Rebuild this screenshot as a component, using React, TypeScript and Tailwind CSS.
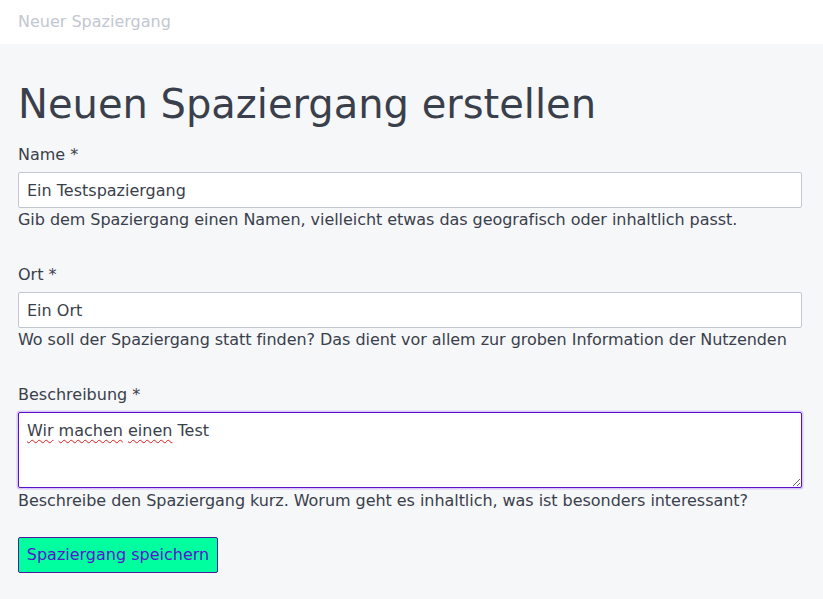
export default function App() {
  return (
    <div className="min-h-[599px] bg-[#f6f7f9] font-['DejaVu_Sans',sans-serif] text-[#3a404b]">
      <header className="flex h-[44px] items-center bg-white px-[18px]">
        <span className="text-[16px] text-[#c2c7d1]">Neuer Spaziergang</span>
      </header>
      <main className="pl-[18px] pr-[21px] pt-[32px]">
        <h1 className="mb-[11px] text-[40px] leading-[56px]">Neuen Spaziergang erstellen</h1>
        <form className="flex flex-col" onSubmit={(e) => e.preventDefault()}>
          <Field label="Name *" value="Ein Testspaziergang" help="Gib dem Spaziergang einen Namen, vielleicht etwas das geografisch oder inhaltlich passt." />
          <Field label="Ort *" value="Ein Ort" help="Wo soll der Spaziergang statt finden? Das dient vor allem zur groben Information der Nutzenden" />
          <label className="block text-[16px] leading-[24px]">Beschreibung *</label>
          <div className="relative mt-[5px]">
            <textarea
              spellCheck={false}
              defaultValue="Wir machen einen Test"
              className="block h-[76px] w-full resize-y rounded-[2px] border border-[#5b10c9] bg-white px-[8px] py-[6px] text-[16px] leading-[24px] text-[#3a404b] outline-none ring-[1.5px] ring-[#d8c8f6]"
            />
            {/* spellcheck squiggles */}
            <div className="pointer-events-none absolute left-0 top-0 px-[9px] py-[7px] text-[16px] leading-[24px] text-transparent">
              <span className="underline decoration-[#e01b1b] decoration-wavy decoration-[1px] underline-offset-[3px]">Wir</span>{" "}
              <span className="underline decoration-[#e01b1b] decoration-wavy decoration-[1px] underline-offset-[3px]">machen</span>{" "}
              <span className="underline decoration-[#e01b1b] decoration-wavy decoration-[1px] underline-offset-[3px]">einen</span> Test
            </div>
          </div>
          <p className="mt-[1px] text-[16px] leading-[24px] tracking-[-0.05px]">
            Beschreibe den Spaziergang kurz. Worum geht es inhaltlich, was ist besonders interessant?
          </p>
          <div className="mt-[24px]">
            <button
              type="submit"
              className="h-[36px] w-[200px] rounded-[2px] border border-[#4c1ba0] bg-[#00ff9e] text-[16px] text-[#5a12cf]"
            >
              Spaziergang speichern
            </button>
          </div>
        </form>
      </main>
    </div>
  );
}

function Field({ label, value, help }: { label: string; value: string; help: string }) {
  return (
    <div className="mb-[31px]">
      <label className="block text-[16px] leading-[24px]">{label}</label>
      <input
        type="text"
        defaultValue={value}
        className="mt-[5px] block h-[36px] w-full rounded-[2px] border border-[#c3c7d0] bg-white px-[8px] text-[16px] text-[#3a404b] outline-none"
      />
      <p className="text-[16px] leading-[24px] tracking-[-0.05px]">{help}</p>
    </div>
  );
}
